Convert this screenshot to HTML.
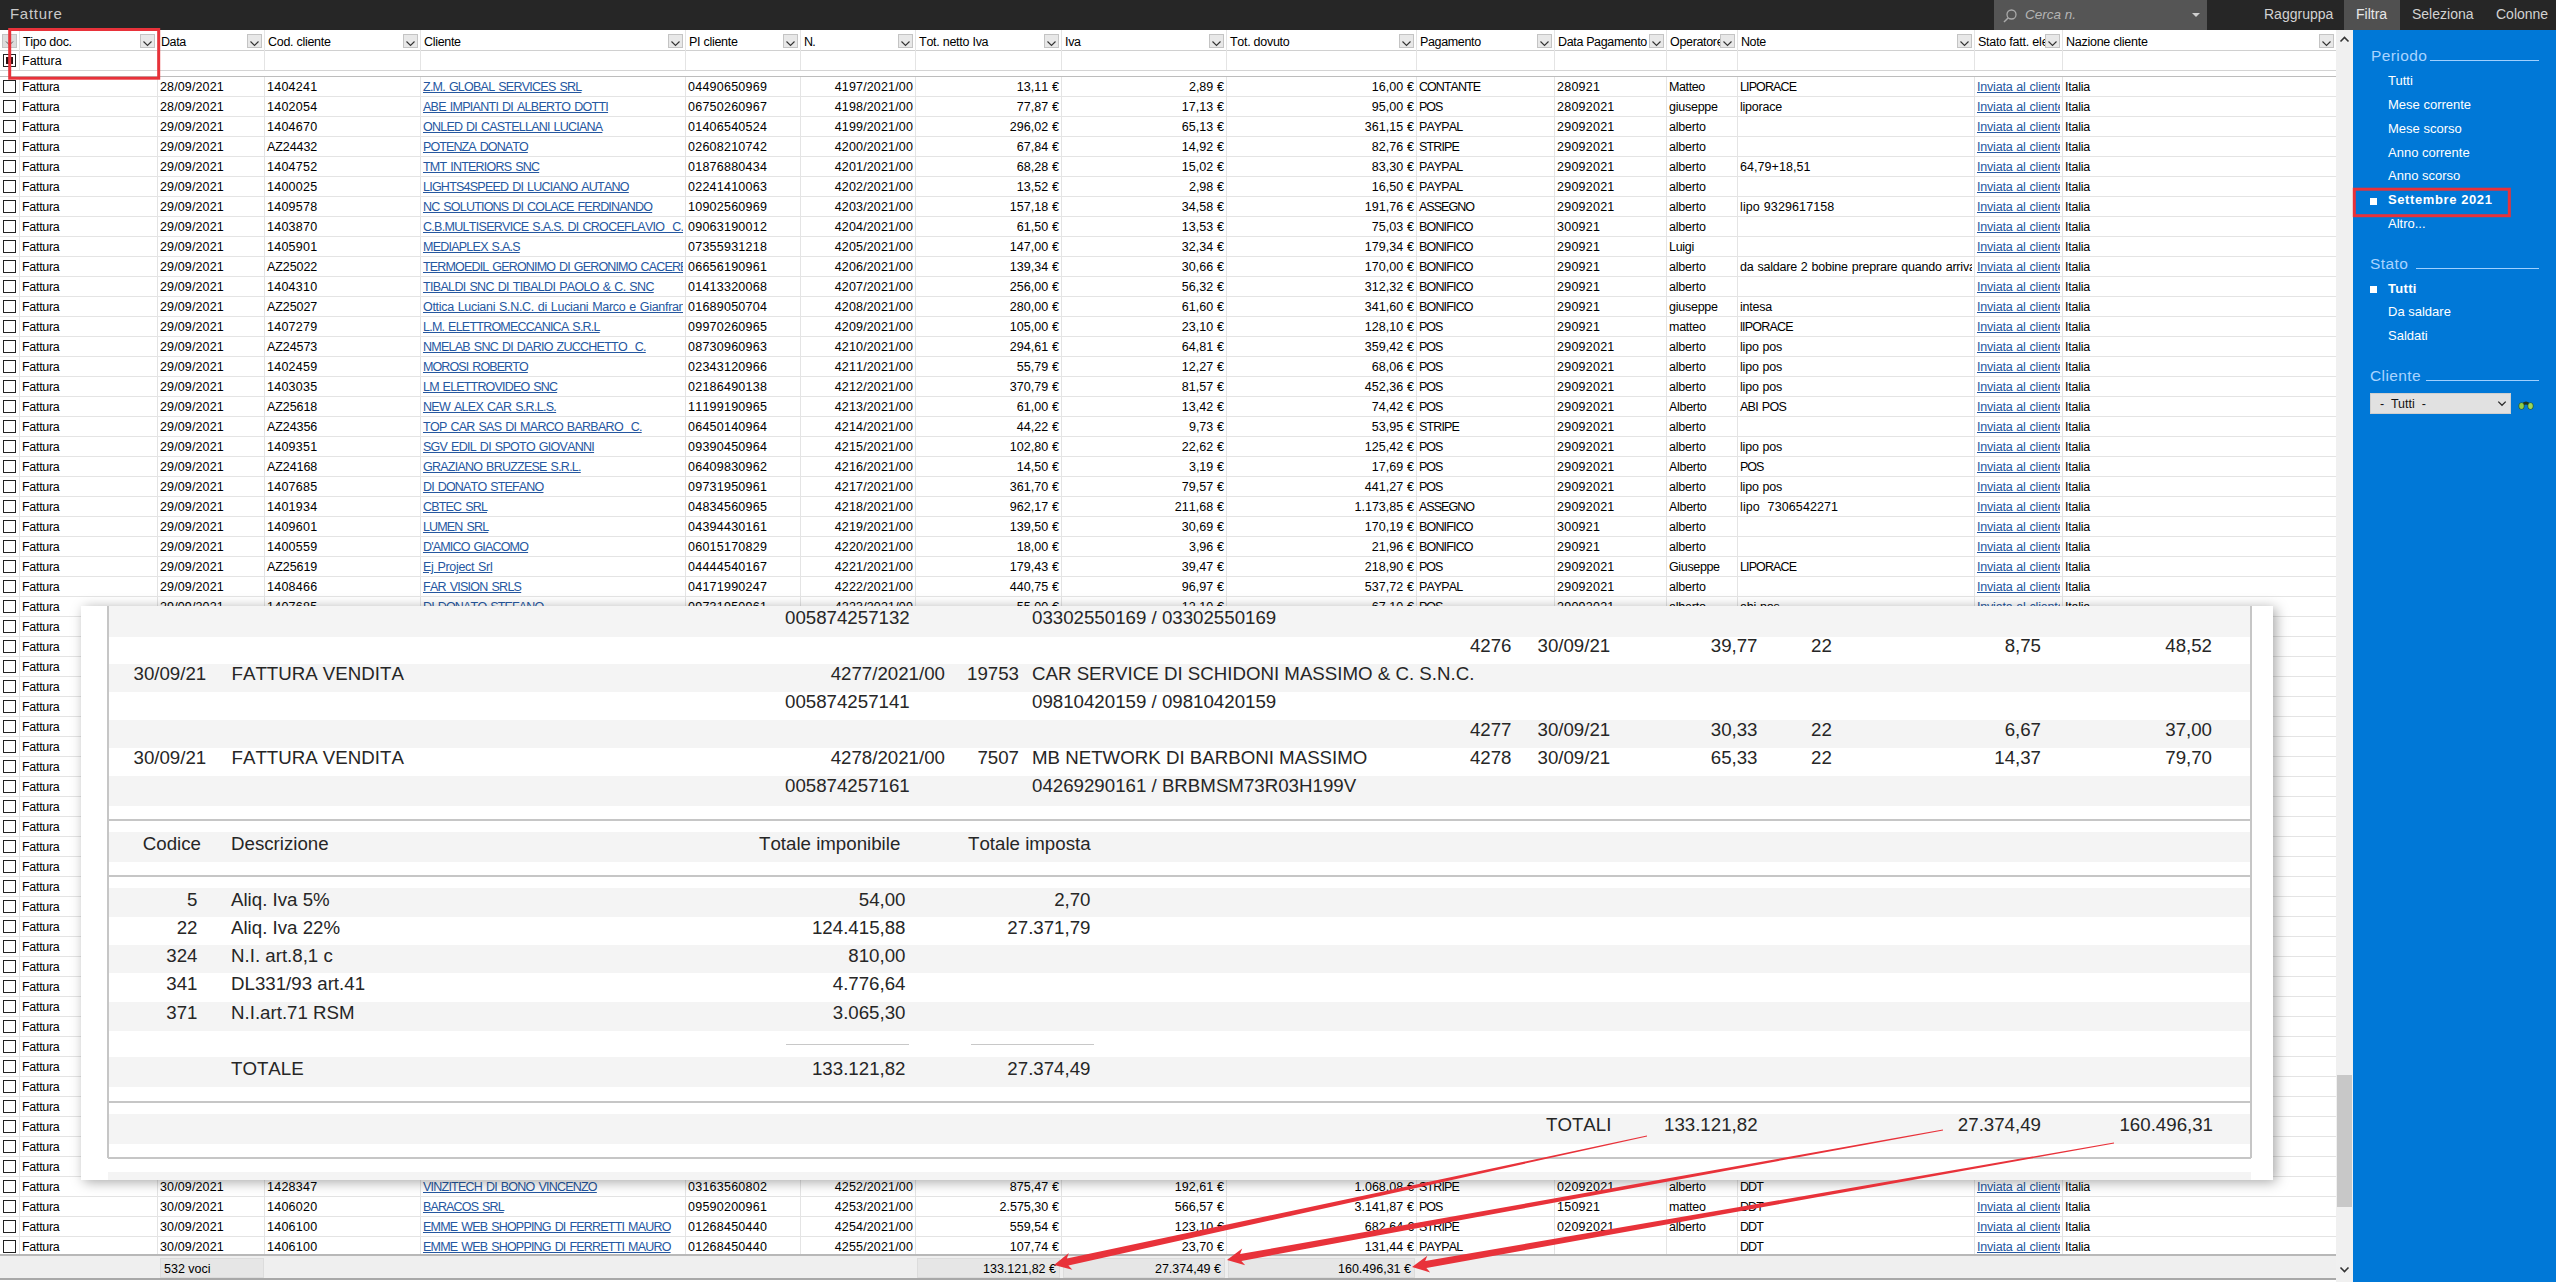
<!DOCTYPE html>
<html><head><meta charset="utf-8">
<style>
*{margin:0;padding:0;box-sizing:border-box}
html,body{width:2556px;height:1282px;overflow:hidden;background:#fff}
body{position:relative;font-family:"Liberation Sans",sans-serif;color:#000}
#top{position:absolute;left:0;top:0;width:2556px;height:30px;background:#262626}
#top .ttl{position:absolute;left:10px;top:5px;font-size:15px;color:#c9c9c9;letter-spacing:0.7px}
#search{position:absolute;left:1994px;top:0;width:213px;height:30px;background:#555}
#search .ph{position:absolute;left:31px;top:7px;font-size:13.5px;font-style:italic;color:#b4b4b4}
#search .tri{position:absolute;left:198px;top:13px;width:0;height:0;border-left:4px solid transparent;border-right:4px solid transparent;border-top:4px solid #cfcfcf}
.tb{position:absolute;top:6px;font-size:14px;color:#d2d2d2}
#filtra{position:absolute;left:2344px;top:0;width:56px;height:30px;background:#505050}
#grid{position:absolute;left:0;top:30px;width:2336px;height:1252px;background:#fff;overflow:hidden}
#hdr{position:absolute;left:0;top:0;width:2336px;height:21px;border-bottom:1px solid #d0d0d0;background:#fff}
.hc{position:absolute;top:0;height:20px;line-height:24px;font-size:12.5px;padding-left:3px;white-space:nowrap;overflow:hidden;color:#000;font-kerning:none}
.dd{position:absolute;top:4px;width:15px;height:14px;background:#e8e8e8;border:1px solid #c4c4c4}
.dd svg,.hcb svg{position:absolute;left:-1px;top:-1px}
.hcb{position:absolute;left:2px;top:4px;width:15px;height:14px;background:#dcdcdc;border:1px solid #c4c4c4}
.vl{position:absolute;top:0;width:1px;height:1224px;background:#e4e4e4}
#frow{position:absolute;left:0;top:21px;width:2336px;height:20px;border-bottom:1px solid #d4d4d4}
#sep{position:absolute;left:0;top:41px;width:2336px;height:6px;background:#fff;border-bottom:1px solid #bdbdbd}
.row{position:absolute;left:0;width:2336px;height:20px;border-bottom:1px solid #e4e4e4}
.c{position:absolute;top:0;height:19px;line-height:20px;font-size:12.5px;white-space:pre;overflow:hidden;font-kerning:none}
.c.l{padding-left:2px}
.c.r{text-align:right;padding-right:2px}
.lnk{color:#25579f;text-decoration:underline}
.cb{position:absolute;left:3px;top:3px;width:13px;height:13px;border:1.5px solid #222;background:#fff}
.cbf{position:absolute;left:3px;top:3px;width:13px;height:13px;border:1.5px solid #222;background:#fff}
.cbf div{position:absolute;left:1.5px;top:1.5px;width:7px;height:7px;background:#2a1010}
#foot{position:absolute;left:0;top:1224px;width:2336px;height:26px;background:#efefef;border-top:2px solid #b8b8b8;border-bottom:2px solid #a8a8a8}
.fc{position:absolute;top:2px;height:20px;background:#e6e6e6;border:1px solid #dcdcdc;font-size:12.5px;line-height:21px;white-space:nowrap}
#sb{position:absolute;left:2336px;top:30px;width:17px;height:1252px;background:#f0f0f0}
#thumb{position:absolute;left:1px;top:1045px;width:15px;height:132px;background:#c8c8c8}
#side{position:absolute;left:2353px;top:30px;width:203px;height:1252px;background:#0078d7;color:#fff}
.sh{position:absolute;left:17px;font-size:16px;color:#a9d4ff;letter-spacing:0.4px}
.shl{position:absolute;height:1px;background:#9fd0ff}
.si{position:absolute;left:35px;font-size:13px;color:#fff}
.si.b{font-weight:bold}
.bul{position:absolute;left:17px;width:7px;height:7px;background:#fff}
#overlay{position:absolute;left:81px;top:606px;width:2192px;height:574px;background:#fff;overflow:hidden;box-shadow:3px 2px 12px rgba(0,0,0,0.35)}
#overlay .t{font-kerning:none}
#ovr{font-family:"Liberation Sans",sans-serif;color:#2a2a2a}
.ot{position:absolute;font-size:19px;white-space:nowrap;line-height:22px}
.ot.r{text-align:right}
.band{position:absolute;left:27px;width:2143px;background:#f4f4f4}
</style></head><body>
<div id="top">
 <div class="ttl">Fatture</div>
 <div id="search">
  <svg style="position:absolute;left:8px;top:8px" width="16" height="16" viewBox="0 0 16 16"><circle cx="9.5" cy="6.5" r="4.5" fill="none" stroke="#aaa" stroke-width="1.3"/><path d="M6.3 9.7 L2 14" stroke="#aaa" stroke-width="1.5"/></svg>
  <div class="ph">Cerca n.</div><div class="tri"></div>
 </div>
 <div class="tb" style="left:2264px">Raggruppa</div>
 <div id="filtra"></div>
 <div class="tb" style="left:2356px;color:#e8e8e8">Filtra</div>
 <div class="tb" style="left:2412px">Seleziona</div>
 <div class="tb" style="left:2496px">Colonne</div>
</div>
<div id="grid">
<div id="hdr"><div class="hcb"><svg width="15" height="14" viewBox="0 0 15 14"><path d="M4 7.5 L7.5 11 L11 7.5" fill="none" stroke="#555" stroke-width="1"/></svg></div><div class="hc" style="left:20px;width:120px;letter-spacing:-0.29px">Tipo doc.</div><div class="dd" style="left:140px"><svg width="15" height="14" viewBox="0 0 15 14"><path d="M3.5 7.5 L7.5 11.5 L11.5 7.5" fill="none" stroke="#333" stroke-width="1.1"/></svg></div><div class="hc" style="left:158px;width:89px;letter-spacing:-0.42px">Data</div><div class="dd" style="left:247px"><svg width="15" height="14" viewBox="0 0 15 14"><path d="M3.5 7.5 L7.5 11.5 L11.5 7.5" fill="none" stroke="#333" stroke-width="1.1"/></svg></div><div class="hc" style="left:265px;width:138px;letter-spacing:-0.28px">Cod. cliente</div><div class="dd" style="left:403px"><svg width="15" height="14" viewBox="0 0 15 14"><path d="M3.5 7.5 L7.5 11.5 L11.5 7.5" fill="none" stroke="#333" stroke-width="1.1"/></svg></div><div class="hc" style="left:421px;width:247px;letter-spacing:-0.31px">Cliente</div><div class="dd" style="left:668px"><svg width="15" height="14" viewBox="0 0 15 14"><path d="M3.5 7.5 L7.5 11.5 L11.5 7.5" fill="none" stroke="#333" stroke-width="1.1"/></svg></div><div class="hc" style="left:686px;width:97px;letter-spacing:-0.28px">PI cliente</div><div class="dd" style="left:783px"><svg width="15" height="14" viewBox="0 0 15 14"><path d="M3.5 7.5 L7.5 11.5 L11.5 7.5" fill="none" stroke="#333" stroke-width="1.1"/></svg></div><div class="hc" style="left:801px;width:97px;letter-spacing:-0.67px">N.</div><div class="dd" style="left:898px"><svg width="15" height="14" viewBox="0 0 15 14"><path d="M3.5 7.5 L7.5 11.5 L11.5 7.5" fill="none" stroke="#333" stroke-width="1.1"/></svg></div><div class="hc" style="left:916px;width:128px;letter-spacing:-0.26px">Tot. netto Iva</div><div class="dd" style="left:1044px"><svg width="15" height="14" viewBox="0 0 15 14"><path d="M3.5 7.5 L7.5 11.5 L11.5 7.5" fill="none" stroke="#333" stroke-width="1.1"/></svg></div><div class="hc" style="left:1062px;width:147px;letter-spacing:-0.30px">Iva</div><div class="dd" style="left:1209px"><svg width="15" height="14" viewBox="0 0 15 14"><path d="M3.5 7.5 L7.5 11.5 L11.5 7.5" fill="none" stroke="#333" stroke-width="1.1"/></svg></div><div class="hc" style="left:1227px;width:172px;letter-spacing:-0.28px">Tot. dovuto</div><div class="dd" style="left:1399px"><svg width="15" height="14" viewBox="0 0 15 14"><path d="M3.5 7.5 L7.5 11.5 L11.5 7.5" fill="none" stroke="#333" stroke-width="1.1"/></svg></div><div class="hc" style="left:1417px;width:120px;letter-spacing:-0.35px">Pagamento</div><div class="dd" style="left:1537px"><svg width="15" height="14" viewBox="0 0 15 14"><path d="M3.5 7.5 L7.5 11.5 L11.5 7.5" fill="none" stroke="#333" stroke-width="1.1"/></svg></div><div class="hc" style="left:1555px;width:94px;letter-spacing:-0.35px">Data Pagamento</div><div class="dd" style="left:1649px"><svg width="15" height="14" viewBox="0 0 15 14"><path d="M3.5 7.5 L7.5 11.5 L11.5 7.5" fill="none" stroke="#333" stroke-width="1.1"/></svg></div><div class="hc" style="left:1667px;width:53px;letter-spacing:-0.33px">Operatore</div><div class="dd" style="left:1720px"><svg width="15" height="14" viewBox="0 0 15 14"><path d="M3.5 7.5 L7.5 11.5 L11.5 7.5" fill="none" stroke="#333" stroke-width="1.1"/></svg></div><div class="hc" style="left:1738px;width:219px;letter-spacing:-0.42px">Note</div><div class="dd" style="left:1957px"><svg width="15" height="14" viewBox="0 0 15 14"><path d="M3.5 7.5 L7.5 11.5 L11.5 7.5" fill="none" stroke="#333" stroke-width="1.1"/></svg></div><div class="hc" style="left:1975px;width:70px;letter-spacing:-0.22px">Stato fatt. elettronica</div><div class="dd" style="left:2045px"><svg width="15" height="14" viewBox="0 0 15 14"><path d="M3.5 7.5 L7.5 11.5 L11.5 7.5" fill="none" stroke="#333" stroke-width="1.1"/></svg></div><div class="hc" style="left:2063px;width:256px;letter-spacing:-0.26px">Nazione cliente</div><div class="dd" style="left:2319px"><svg width="15" height="14" viewBox="0 0 15 14"><path d="M3.5 7.5 L7.5 11.5 L11.5 7.5" fill="none" stroke="#333" stroke-width="1.1"/></svg></div></div>
<div class="vl" style="left:19px"></div><div class="vl" style="left:157px"></div><div class="vl" style="left:264px"></div><div class="vl" style="left:420px"></div><div class="vl" style="left:685px"></div><div class="vl" style="left:800px"></div><div class="vl" style="left:915px"></div><div class="vl" style="left:1061px"></div><div class="vl" style="left:1226px"></div><div class="vl" style="left:1416px"></div><div class="vl" style="left:1554px"></div><div class="vl" style="left:1666px"></div><div class="vl" style="left:1737px"></div><div class="vl" style="left:1974px"></div><div class="vl" style="left:2062px"></div>
<div id="frow"><div class="cbf"><div></div></div><div class="c l" style="left:20px;width:137px">Fattura</div></div>
<div class="row" style="top:47px"><div class="cb"></div><div class="c l" style="left:20px;width:135px;letter-spacing:-0.30px">Fattura</div><div class="c l" style="left:158px;width:104px;letter-spacing:0.13px">28/09/2021</div><div class="c l" style="left:265px;width:153px;letter-spacing:0.24px">1404241</div><div class="c l lnk" style="left:421px;width:262px;letter-spacing:-0.75px;word-spacing:1.16px">Z.M. GLOBAL SERVICES SRL</div><div class="c l" style="left:686px;width:112px;letter-spacing:0.24px">04490650969</div><div class="c r" style="left:801px;width:114px;letter-spacing:0.15px">4197/2021/00</div><div class="c r" style="left:916px;width:145px;word-spacing:0.42px">13,11 €</div><div class="c r" style="left:1062px;width:164px;letter-spacing:-0.04px;word-spacing:0.46px">2,89 €</div><div class="c r" style="left:1227px;width:189px;word-spacing:0.42px">16,00 €</div><div class="c l" style="left:1417px;width:135px;letter-spacing:-0.95px">CONTANTE</div><div class="c l" style="left:1555px;width:109px;letter-spacing:0.24px">280921</div><div class="c l" style="left:1667px;width:68px;letter-spacing:-0.38px">Matteo</div><div class="c l" style="left:1738px;width:234px;letter-spacing:-0.88px">LIPORACE</div><div class="c l lnk" style="left:1975px;width:85px;letter-spacing:-0.20px;word-spacing:0.61px">Inviata al cliente</div><div class="c l" style="left:2063px;width:271px;letter-spacing:-0.22px">Italia</div></div><div class="row" style="top:67px"><div class="cb"></div><div class="c l" style="left:20px;width:135px;letter-spacing:-0.30px">Fattura</div><div class="c l" style="left:158px;width:104px;letter-spacing:0.13px">28/09/2021</div><div class="c l" style="left:265px;width:153px;letter-spacing:0.24px">1402054</div><div class="c l lnk" style="left:421px;width:262px;letter-spacing:-0.72px;word-spacing:1.13px">ABE IMPIANTI DI ALBERTO DOTTI</div><div class="c l" style="left:686px;width:112px;letter-spacing:0.24px">06750260967</div><div class="c r" style="left:801px;width:114px;letter-spacing:0.15px">4198/2021/00</div><div class="c r" style="left:916px;width:145px;word-spacing:0.42px">77,87 €</div><div class="c r" style="left:1062px;width:164px;word-spacing:0.42px">17,13 €</div><div class="c r" style="left:1227px;width:189px;word-spacing:0.42px">95,00 €</div><div class="c l" style="left:1417px;width:135px;letter-spacing:-0.98px">POS</div><div class="c l" style="left:1555px;width:109px;letter-spacing:0.24px">28092021</div><div class="c l" style="left:1667px;width:68px;letter-spacing:-0.25px">giuseppe</div><div class="c l" style="left:1738px;width:234px;letter-spacing:-0.22px">liporace</div><div class="c l lnk" style="left:1975px;width:85px;letter-spacing:-0.20px;word-spacing:0.61px">Inviata al cliente</div><div class="c l" style="left:2063px;width:271px;letter-spacing:-0.22px">Italia</div></div><div class="row" style="top:87px"><div class="cb"></div><div class="c l" style="left:20px;width:135px;letter-spacing:-0.30px">Fattura</div><div class="c l" style="left:158px;width:104px;letter-spacing:0.13px">29/09/2021</div><div class="c l" style="left:265px;width:153px;letter-spacing:0.24px">1404670</div><div class="c l lnk" style="left:421px;width:262px;letter-spacing:-0.77px;word-spacing:1.18px">ONLED DI CASTELLANI LUCIANA</div><div class="c l" style="left:686px;width:112px;letter-spacing:0.24px">01406540524</div><div class="c r" style="left:801px;width:114px;letter-spacing:0.15px">4199/2021/00</div><div class="c r" style="left:916px;width:145px;letter-spacing:0.03px;word-spacing:0.39px">296,02 €</div><div class="c r" style="left:1062px;width:164px;word-spacing:0.42px">65,13 €</div><div class="c r" style="left:1227px;width:189px;letter-spacing:0.03px;word-spacing:0.39px">361,15 €</div><div class="c l" style="left:1417px;width:135px;letter-spacing:-0.90px">PAYPAL</div><div class="c l" style="left:1555px;width:109px;letter-spacing:0.24px">29092021</div><div class="c l" style="left:1667px;width:68px;letter-spacing:-0.22px">alberto</div><div class="c l lnk" style="left:1975px;width:85px;letter-spacing:-0.20px;word-spacing:0.61px">Inviata al cliente</div><div class="c l" style="left:2063px;width:271px;letter-spacing:-0.22px">Italia</div></div><div class="row" style="top:107px"><div class="cb"></div><div class="c l" style="left:20px;width:135px;letter-spacing:-0.30px">Fattura</div><div class="c l" style="left:158px;width:104px;letter-spacing:0.13px">29/09/2021</div><div class="c l" style="left:265px;width:153px;letter-spacing:-0.08px">AZ24432</div><div class="c l lnk" style="left:421px;width:262px;letter-spacing:-0.89px;word-spacing:1.31px">POTENZA DONATO</div><div class="c l" style="left:686px;width:112px;letter-spacing:0.24px">02608210742</div><div class="c r" style="left:801px;width:114px;letter-spacing:0.15px">4200/2021/00</div><div class="c r" style="left:916px;width:145px;word-spacing:0.42px">67,84 €</div><div class="c r" style="left:1062px;width:164px;word-spacing:0.42px">14,92 €</div><div class="c r" style="left:1227px;width:189px;word-spacing:0.42px">82,76 €</div><div class="c l" style="left:1417px;width:135px;letter-spacing:-0.84px">STRIPE</div><div class="c l" style="left:1555px;width:109px;letter-spacing:0.24px">29092021</div><div class="c l" style="left:1667px;width:68px;letter-spacing:-0.22px">alberto</div><div class="c l lnk" style="left:1975px;width:85px;letter-spacing:-0.20px;word-spacing:0.61px">Inviata al cliente</div><div class="c l" style="left:2063px;width:271px;letter-spacing:-0.22px">Italia</div></div><div class="row" style="top:127px"><div class="cb"></div><div class="c l" style="left:20px;width:135px;letter-spacing:-0.30px">Fattura</div><div class="c l" style="left:158px;width:104px;letter-spacing:0.13px">29/09/2021</div><div class="c l" style="left:265px;width:153px;letter-spacing:0.24px">1404752</div><div class="c l lnk" style="left:421px;width:262px;letter-spacing:-0.78px;word-spacing:1.20px">TMT INTERIORS SNC</div><div class="c l" style="left:686px;width:112px;letter-spacing:0.24px">01876880434</div><div class="c r" style="left:801px;width:114px;letter-spacing:0.15px">4201/2021/00</div><div class="c r" style="left:916px;width:145px;word-spacing:0.42px">68,28 €</div><div class="c r" style="left:1062px;width:164px;word-spacing:0.42px">15,02 €</div><div class="c r" style="left:1227px;width:189px;word-spacing:0.42px">83,30 €</div><div class="c l" style="left:1417px;width:135px;letter-spacing:-0.90px">PAYPAL</div><div class="c l" style="left:1555px;width:109px;letter-spacing:0.24px">29092021</div><div class="c l" style="left:1667px;width:68px;letter-spacing:-0.22px">alberto</div><div class="c l" style="left:1738px;width:234px;letter-spacing:0.05px">64,79+18,51</div><div class="c l lnk" style="left:1975px;width:85px;letter-spacing:-0.20px;word-spacing:0.61px">Inviata al cliente</div><div class="c l" style="left:2063px;width:271px;letter-spacing:-0.22px">Italia</div></div><div class="row" style="top:147px"><div class="cb"></div><div class="c l" style="left:20px;width:135px;letter-spacing:-0.30px">Fattura</div><div class="c l" style="left:158px;width:104px;letter-spacing:0.13px">29/09/2021</div><div class="c l" style="left:265px;width:153px;letter-spacing:0.24px">1400025</div><div class="c l lnk" style="left:421px;width:262px;letter-spacing:-0.76px;word-spacing:1.18px">LIGHTS4SPEED DI LUCIANO AUTANO</div><div class="c l" style="left:686px;width:112px;letter-spacing:0.24px">02241410063</div><div class="c r" style="left:801px;width:114px;letter-spacing:0.15px">4202/2021/00</div><div class="c r" style="left:916px;width:145px;word-spacing:0.42px">13,52 €</div><div class="c r" style="left:1062px;width:164px;letter-spacing:-0.04px;word-spacing:0.46px">2,98 €</div><div class="c r" style="left:1227px;width:189px;word-spacing:0.42px">16,50 €</div><div class="c l" style="left:1417px;width:135px;letter-spacing:-0.90px">PAYPAL</div><div class="c l" style="left:1555px;width:109px;letter-spacing:0.24px">29092021</div><div class="c l" style="left:1667px;width:68px;letter-spacing:-0.22px">alberto</div><div class="c l lnk" style="left:1975px;width:85px;letter-spacing:-0.20px;word-spacing:0.61px">Inviata al cliente</div><div class="c l" style="left:2063px;width:271px;letter-spacing:-0.22px">Italia</div></div><div class="row" style="top:167px"><div class="cb"></div><div class="c l" style="left:20px;width:135px;letter-spacing:-0.30px">Fattura</div><div class="c l" style="left:158px;width:104px;letter-spacing:0.13px">29/09/2021</div><div class="c l" style="left:265px;width:153px;letter-spacing:0.24px">1409578</div><div class="c l lnk" style="left:421px;width:262px;letter-spacing:-0.80px;word-spacing:1.21px">NC SOLUTIONS DI COLACE FERDINANDO</div><div class="c l" style="left:686px;width:112px;letter-spacing:0.24px">10902560969</div><div class="c r" style="left:801px;width:114px;letter-spacing:0.15px">4203/2021/00</div><div class="c r" style="left:916px;width:145px;letter-spacing:0.03px;word-spacing:0.39px">157,18 €</div><div class="c r" style="left:1062px;width:164px;word-spacing:0.42px">34,58 €</div><div class="c r" style="left:1227px;width:189px;letter-spacing:0.03px;word-spacing:0.39px">191,76 €</div><div class="c l" style="left:1417px;width:135px;letter-spacing:-0.98px">ASSEGNO</div><div class="c l" style="left:1555px;width:109px;letter-spacing:0.24px">29092021</div><div class="c l" style="left:1667px;width:68px;letter-spacing:-0.22px">alberto</div><div class="c l" style="left:1738px;width:234px;letter-spacing:0.11px;word-spacing:0.31px">lipo 9329617158</div><div class="c l lnk" style="left:1975px;width:85px;letter-spacing:-0.20px;word-spacing:0.61px">Inviata al cliente</div><div class="c l" style="left:2063px;width:271px;letter-spacing:-0.22px">Italia</div></div><div class="row" style="top:187px"><div class="cb"></div><div class="c l" style="left:20px;width:135px;letter-spacing:-0.30px">Fattura</div><div class="c l" style="left:158px;width:104px;letter-spacing:0.13px">29/09/2021</div><div class="c l" style="left:265px;width:153px;letter-spacing:0.24px">1403870</div><div class="c l lnk" style="left:421px;width:262px;letter-spacing:-0.70px;word-spacing:1.11px">C.B.MULTISERVICE S.A.S. DI CROCEFLAVIO  C.</div><div class="c l" style="left:686px;width:112px;letter-spacing:0.24px">09063190012</div><div class="c r" style="left:801px;width:114px;letter-spacing:0.15px">4204/2021/00</div><div class="c r" style="left:916px;width:145px;word-spacing:0.42px">61,50 €</div><div class="c r" style="left:1062px;width:164px;word-spacing:0.42px">13,53 €</div><div class="c r" style="left:1227px;width:189px;word-spacing:0.42px">75,03 €</div><div class="c l" style="left:1417px;width:135px;letter-spacing:-0.84px">BONIFICO</div><div class="c l" style="left:1555px;width:109px;letter-spacing:0.24px">300921</div><div class="c l" style="left:1667px;width:68px;letter-spacing:-0.22px">alberto</div><div class="c l lnk" style="left:1975px;width:85px;letter-spacing:-0.20px;word-spacing:0.61px">Inviata al cliente</div><div class="c l" style="left:2063px;width:271px;letter-spacing:-0.22px">Italia</div></div><div class="row" style="top:207px"><div class="cb"></div><div class="c l" style="left:20px;width:135px;letter-spacing:-0.30px">Fattura</div><div class="c l" style="left:158px;width:104px;letter-spacing:0.13px">29/09/2021</div><div class="c l" style="left:265px;width:153px;letter-spacing:0.24px">1405901</div><div class="c l lnk" style="left:421px;width:262px;letter-spacing:-0.76px;word-spacing:1.18px">MEDIAPLEX S.A.S</div><div class="c l" style="left:686px;width:112px;letter-spacing:0.24px">07355931218</div><div class="c r" style="left:801px;width:114px;letter-spacing:0.15px">4205/2021/00</div><div class="c r" style="left:916px;width:145px;letter-spacing:0.03px;word-spacing:0.39px">147,00 €</div><div class="c r" style="left:1062px;width:164px;word-spacing:0.42px">32,34 €</div><div class="c r" style="left:1227px;width:189px;letter-spacing:0.03px;word-spacing:0.39px">179,34 €</div><div class="c l" style="left:1417px;width:135px;letter-spacing:-0.84px">BONIFICO</div><div class="c l" style="left:1555px;width:109px;letter-spacing:0.24px">290921</div><div class="c l" style="left:1667px;width:68px;letter-spacing:-0.31px">Luigi</div><div class="c l lnk" style="left:1975px;width:85px;letter-spacing:-0.20px;word-spacing:0.61px">Inviata al cliente</div><div class="c l" style="left:2063px;width:271px;letter-spacing:-0.22px">Italia</div></div><div class="row" style="top:227px"><div class="cb"></div><div class="c l" style="left:20px;width:135px;letter-spacing:-0.30px">Fattura</div><div class="c l" style="left:158px;width:104px;letter-spacing:0.13px">29/09/2021</div><div class="c l" style="left:265px;width:153px;letter-spacing:-0.08px">AZ25022</div><div class="c l lnk" style="left:421px;width:262px;letter-spacing:-0.83px;word-spacing:1.25px">TERMOEDIL GERONIMO DI GERONIMO CACERES</div><div class="c l" style="left:686px;width:112px;letter-spacing:0.24px">06656190961</div><div class="c r" style="left:801px;width:114px;letter-spacing:0.15px">4206/2021/00</div><div class="c r" style="left:916px;width:145px;letter-spacing:0.03px;word-spacing:0.39px">139,34 €</div><div class="c r" style="left:1062px;width:164px;word-spacing:0.42px">30,66 €</div><div class="c r" style="left:1227px;width:189px;letter-spacing:0.03px;word-spacing:0.39px">170,00 €</div><div class="c l" style="left:1417px;width:135px;letter-spacing:-0.84px">BONIFICO</div><div class="c l" style="left:1555px;width:109px;letter-spacing:0.24px">290921</div><div class="c l" style="left:1667px;width:68px;letter-spacing:-0.22px">alberto</div><div class="c l" style="left:1738px;width:234px;letter-spacing:-0.20px;word-spacing:0.61px">da saldare 2 bobine preprare quando arriva</div><div class="c l lnk" style="left:1975px;width:85px;letter-spacing:-0.20px;word-spacing:0.61px">Inviata al cliente</div><div class="c l" style="left:2063px;width:271px;letter-spacing:-0.22px">Italia</div></div><div class="row" style="top:247px"><div class="cb"></div><div class="c l" style="left:20px;width:135px;letter-spacing:-0.30px">Fattura</div><div class="c l" style="left:158px;width:104px;letter-spacing:0.13px">29/09/2021</div><div class="c l" style="left:265px;width:153px;letter-spacing:0.24px">1404310</div><div class="c l lnk" style="left:421px;width:262px;letter-spacing:-0.67px;word-spacing:1.08px">TIBALDI SNC DI TIBALDI PAOLO &amp; C. SNC</div><div class="c l" style="left:686px;width:112px;letter-spacing:0.24px">01413320068</div><div class="c r" style="left:801px;width:114px;letter-spacing:0.15px">4207/2021/00</div><div class="c r" style="left:916px;width:145px;letter-spacing:0.03px;word-spacing:0.39px">256,00 €</div><div class="c r" style="left:1062px;width:164px;word-spacing:0.42px">56,32 €</div><div class="c r" style="left:1227px;width:189px;letter-spacing:0.03px;word-spacing:0.39px">312,32 €</div><div class="c l" style="left:1417px;width:135px;letter-spacing:-0.84px">BONIFICO</div><div class="c l" style="left:1555px;width:109px;letter-spacing:0.24px">290921</div><div class="c l" style="left:1667px;width:68px;letter-spacing:-0.22px">alberto</div><div class="c l lnk" style="left:1975px;width:85px;letter-spacing:-0.20px;word-spacing:0.61px">Inviata al cliente</div><div class="c l" style="left:2063px;width:271px;letter-spacing:-0.22px">Italia</div></div><div class="row" style="top:267px"><div class="cb"></div><div class="c l" style="left:20px;width:135px;letter-spacing:-0.30px">Fattura</div><div class="c l" style="left:158px;width:104px;letter-spacing:0.13px">29/09/2021</div><div class="c l" style="left:265px;width:153px;letter-spacing:-0.08px">AZ25027</div><div class="c l lnk" style="left:421px;width:262px;letter-spacing:-0.31px;word-spacing:0.73px">Ottica Luciani S.N.C. di Luciani Marco e Gianfranco</div><div class="c l" style="left:686px;width:112px;letter-spacing:0.24px">01689050704</div><div class="c r" style="left:801px;width:114px;letter-spacing:0.15px">4208/2021/00</div><div class="c r" style="left:916px;width:145px;letter-spacing:0.03px;word-spacing:0.39px">280,00 €</div><div class="c r" style="left:1062px;width:164px;word-spacing:0.42px">61,60 €</div><div class="c r" style="left:1227px;width:189px;letter-spacing:0.03px;word-spacing:0.39px">341,60 €</div><div class="c l" style="left:1417px;width:135px;letter-spacing:-0.84px">BONIFICO</div><div class="c l" style="left:1555px;width:109px;letter-spacing:0.24px">290921</div><div class="c l" style="left:1667px;width:68px;letter-spacing:-0.25px">giuseppe</div><div class="c l" style="left:1738px;width:234px;letter-spacing:-0.22px">intesa</div><div class="c l lnk" style="left:1975px;width:85px;letter-spacing:-0.20px;word-spacing:0.61px">Inviata al cliente</div><div class="c l" style="left:2063px;width:271px;letter-spacing:-0.22px">Italia</div></div><div class="row" style="top:287px"><div class="cb"></div><div class="c l" style="left:20px;width:135px;letter-spacing:-0.30px">Fattura</div><div class="c l" style="left:158px;width:104px;letter-spacing:0.13px">29/09/2021</div><div class="c l" style="left:265px;width:153px;letter-spacing:0.24px">1407279</div><div class="c l lnk" style="left:421px;width:262px;letter-spacing:-0.77px;word-spacing:1.18px">L.M. ELETTROMECCANICA S.R.L</div><div class="c l" style="left:686px;width:112px;letter-spacing:0.24px">09970260965</div><div class="c r" style="left:801px;width:114px;letter-spacing:0.15px">4209/2021/00</div><div class="c r" style="left:916px;width:145px;letter-spacing:0.03px;word-spacing:0.39px">105,00 €</div><div class="c r" style="left:1062px;width:164px;word-spacing:0.42px">23,10 €</div><div class="c r" style="left:1227px;width:189px;letter-spacing:0.03px;word-spacing:0.39px">128,10 €</div><div class="c l" style="left:1417px;width:135px;letter-spacing:-0.98px">POS</div><div class="c l" style="left:1555px;width:109px;letter-spacing:0.24px">290921</div><div class="c l" style="left:1667px;width:68px;letter-spacing:-0.25px">matteo</div><div class="c l" style="left:1738px;width:234px;letter-spacing:-0.79px">lIPORACE</div><div class="c l lnk" style="left:1975px;width:85px;letter-spacing:-0.20px;word-spacing:0.61px">Inviata al cliente</div><div class="c l" style="left:2063px;width:271px;letter-spacing:-0.22px">Italia</div></div><div class="row" style="top:307px"><div class="cb"></div><div class="c l" style="left:20px;width:135px;letter-spacing:-0.30px">Fattura</div><div class="c l" style="left:158px;width:104px;letter-spacing:0.13px">29/09/2021</div><div class="c l" style="left:265px;width:153px;letter-spacing:-0.08px">AZ24573</div><div class="c l lnk" style="left:421px;width:262px;letter-spacing:-0.74px;word-spacing:1.15px">NMELAB SNC DI DARIO ZUCCHETTO  C.</div><div class="c l" style="left:686px;width:112px;letter-spacing:0.24px">08730960963</div><div class="c r" style="left:801px;width:114px;letter-spacing:0.15px">4210/2021/00</div><div class="c r" style="left:916px;width:145px;letter-spacing:0.03px;word-spacing:0.39px">294,61 €</div><div class="c r" style="left:1062px;width:164px;word-spacing:0.42px">64,81 €</div><div class="c r" style="left:1227px;width:189px;letter-spacing:0.03px;word-spacing:0.39px">359,42 €</div><div class="c l" style="left:1417px;width:135px;letter-spacing:-0.98px">POS</div><div class="c l" style="left:1555px;width:109px;letter-spacing:0.24px">29092021</div><div class="c l" style="left:1667px;width:68px;letter-spacing:-0.22px">alberto</div><div class="c l" style="left:1738px;width:234px;letter-spacing:-0.20px;word-spacing:0.61px">lipo pos</div><div class="c l lnk" style="left:1975px;width:85px;letter-spacing:-0.20px;word-spacing:0.61px">Inviata al cliente</div><div class="c l" style="left:2063px;width:271px;letter-spacing:-0.22px">Italia</div></div><div class="row" style="top:327px"><div class="cb"></div><div class="c l" style="left:20px;width:135px;letter-spacing:-0.30px">Fattura</div><div class="c l" style="left:158px;width:104px;letter-spacing:0.13px">29/09/2021</div><div class="c l" style="left:265px;width:153px;letter-spacing:0.24px">1402459</div><div class="c l lnk" style="left:421px;width:262px;letter-spacing:-0.89px;word-spacing:1.31px">MOROSI ROBERTO</div><div class="c l" style="left:686px;width:112px;letter-spacing:0.24px">02343120966</div><div class="c r" style="left:801px;width:114px;letter-spacing:0.15px">4211/2021/00</div><div class="c r" style="left:916px;width:145px;word-spacing:0.42px">55,79 €</div><div class="c r" style="left:1062px;width:164px;word-spacing:0.42px">12,27 €</div><div class="c r" style="left:1227px;width:189px;word-spacing:0.42px">68,06 €</div><div class="c l" style="left:1417px;width:135px;letter-spacing:-0.98px">POS</div><div class="c l" style="left:1555px;width:109px;letter-spacing:0.24px">29092021</div><div class="c l" style="left:1667px;width:68px;letter-spacing:-0.22px">alberto</div><div class="c l" style="left:1738px;width:234px;letter-spacing:-0.20px;word-spacing:0.61px">lipo pos</div><div class="c l lnk" style="left:1975px;width:85px;letter-spacing:-0.20px;word-spacing:0.61px">Inviata al cliente</div><div class="c l" style="left:2063px;width:271px;letter-spacing:-0.22px">Italia</div></div><div class="row" style="top:347px"><div class="cb"></div><div class="c l" style="left:20px;width:135px;letter-spacing:-0.30px">Fattura</div><div class="c l" style="left:158px;width:104px;letter-spacing:0.13px">29/09/2021</div><div class="c l" style="left:265px;width:153px;letter-spacing:0.24px">1403035</div><div class="c l lnk" style="left:421px;width:262px;letter-spacing:-0.82px;word-spacing:1.24px">LM ELETTROVIDEO SNC</div><div class="c l" style="left:686px;width:112px;letter-spacing:0.24px">02186490138</div><div class="c r" style="left:801px;width:114px;letter-spacing:0.15px">4212/2021/00</div><div class="c r" style="left:916px;width:145px;letter-spacing:0.03px;word-spacing:0.39px">370,79 €</div><div class="c r" style="left:1062px;width:164px;word-spacing:0.42px">81,57 €</div><div class="c r" style="left:1227px;width:189px;letter-spacing:0.03px;word-spacing:0.39px">452,36 €</div><div class="c l" style="left:1417px;width:135px;letter-spacing:-0.98px">POS</div><div class="c l" style="left:1555px;width:109px;letter-spacing:0.24px">29092021</div><div class="c l" style="left:1667px;width:68px;letter-spacing:-0.22px">alberto</div><div class="c l" style="left:1738px;width:234px;letter-spacing:-0.20px;word-spacing:0.61px">lipo pos</div><div class="c l lnk" style="left:1975px;width:85px;letter-spacing:-0.20px;word-spacing:0.61px">Inviata al cliente</div><div class="c l" style="left:2063px;width:271px;letter-spacing:-0.22px">Italia</div></div><div class="row" style="top:367px"><div class="cb"></div><div class="c l" style="left:20px;width:135px;letter-spacing:-0.30px">Fattura</div><div class="c l" style="left:158px;width:104px;letter-spacing:0.13px">29/09/2021</div><div class="c l" style="left:265px;width:153px;letter-spacing:-0.08px">AZ25618</div><div class="c l lnk" style="left:421px;width:262px;letter-spacing:-0.70px;word-spacing:1.11px">NEW ALEX CAR S.R.L.S.</div><div class="c l" style="left:686px;width:112px;letter-spacing:0.24px">11199190965</div><div class="c r" style="left:801px;width:114px;letter-spacing:0.15px">4213/2021/00</div><div class="c r" style="left:916px;width:145px;word-spacing:0.42px">61,00 €</div><div class="c r" style="left:1062px;width:164px;word-spacing:0.42px">13,42 €</div><div class="c r" style="left:1227px;width:189px;word-spacing:0.42px">74,42 €</div><div class="c l" style="left:1417px;width:135px;letter-spacing:-0.98px">POS</div><div class="c l" style="left:1555px;width:109px;letter-spacing:0.24px">29092021</div><div class="c l" style="left:1667px;width:68px;letter-spacing:-0.31px">Alberto</div><div class="c l" style="left:1738px;width:234px;letter-spacing:-0.74px;word-spacing:1.15px">ABI POS</div><div class="c l lnk" style="left:1975px;width:85px;letter-spacing:-0.20px;word-spacing:0.61px">Inviata al cliente</div><div class="c l" style="left:2063px;width:271px;letter-spacing:-0.22px">Italia</div></div><div class="row" style="top:387px"><div class="cb"></div><div class="c l" style="left:20px;width:135px;letter-spacing:-0.30px">Fattura</div><div class="c l" style="left:158px;width:104px;letter-spacing:0.13px">29/09/2021</div><div class="c l" style="left:265px;width:153px;letter-spacing:-0.08px">AZ24356</div><div class="c l lnk" style="left:421px;width:262px;letter-spacing:-0.73px;word-spacing:1.14px">TOP CAR SAS DI MARCO BARBARO  C.</div><div class="c l" style="left:686px;width:112px;letter-spacing:0.24px">06450140964</div><div class="c r" style="left:801px;width:114px;letter-spacing:0.15px">4214/2021/00</div><div class="c r" style="left:916px;width:145px;word-spacing:0.42px">44,22 €</div><div class="c r" style="left:1062px;width:164px;letter-spacing:-0.04px;word-spacing:0.46px">9,73 €</div><div class="c r" style="left:1227px;width:189px;word-spacing:0.42px">53,95 €</div><div class="c l" style="left:1417px;width:135px;letter-spacing:-0.84px">STRIPE</div><div class="c l" style="left:1555px;width:109px;letter-spacing:0.24px">29092021</div><div class="c l" style="left:1667px;width:68px;letter-spacing:-0.22px">alberto</div><div class="c l lnk" style="left:1975px;width:85px;letter-spacing:-0.20px;word-spacing:0.61px">Inviata al cliente</div><div class="c l" style="left:2063px;width:271px;letter-spacing:-0.22px">Italia</div></div><div class="row" style="top:407px"><div class="cb"></div><div class="c l" style="left:20px;width:135px;letter-spacing:-0.30px">Fattura</div><div class="c l" style="left:158px;width:104px;letter-spacing:0.13px">29/09/2021</div><div class="c l" style="left:265px;width:153px;letter-spacing:0.24px">1409351</div><div class="c l lnk" style="left:421px;width:262px;letter-spacing:-0.73px;word-spacing:1.15px">SGV EDIL DI SPOTO GIOVANNI</div><div class="c l" style="left:686px;width:112px;letter-spacing:0.24px">09390450964</div><div class="c r" style="left:801px;width:114px;letter-spacing:0.15px">4215/2021/00</div><div class="c r" style="left:916px;width:145px;letter-spacing:0.03px;word-spacing:0.39px">102,80 €</div><div class="c r" style="left:1062px;width:164px;word-spacing:0.42px">22,62 €</div><div class="c r" style="left:1227px;width:189px;letter-spacing:0.03px;word-spacing:0.39px">125,42 €</div><div class="c l" style="left:1417px;width:135px;letter-spacing:-0.98px">POS</div><div class="c l" style="left:1555px;width:109px;letter-spacing:0.24px">29092021</div><div class="c l" style="left:1667px;width:68px;letter-spacing:-0.22px">alberto</div><div class="c l" style="left:1738px;width:234px;letter-spacing:-0.20px;word-spacing:0.61px">lipo pos</div><div class="c l lnk" style="left:1975px;width:85px;letter-spacing:-0.20px;word-spacing:0.61px">Inviata al cliente</div><div class="c l" style="left:2063px;width:271px;letter-spacing:-0.22px">Italia</div></div><div class="row" style="top:427px"><div class="cb"></div><div class="c l" style="left:20px;width:135px;letter-spacing:-0.30px">Fattura</div><div class="c l" style="left:158px;width:104px;letter-spacing:0.13px">29/09/2021</div><div class="c l" style="left:265px;width:153px;letter-spacing:-0.08px">AZ24168</div><div class="c l lnk" style="left:421px;width:262px;letter-spacing:-0.76px;word-spacing:1.18px">GRAZIANO BRUZZESE S.R.L.</div><div class="c l" style="left:686px;width:112px;letter-spacing:0.24px">06409830962</div><div class="c r" style="left:801px;width:114px;letter-spacing:0.15px">4216/2021/00</div><div class="c r" style="left:916px;width:145px;word-spacing:0.42px">14,50 €</div><div class="c r" style="left:1062px;width:164px;letter-spacing:-0.04px;word-spacing:0.46px">3,19 €</div><div class="c r" style="left:1227px;width:189px;word-spacing:0.42px">17,69 €</div><div class="c l" style="left:1417px;width:135px;letter-spacing:-0.98px">POS</div><div class="c l" style="left:1555px;width:109px;letter-spacing:0.24px">29092021</div><div class="c l" style="left:1667px;width:68px;letter-spacing:-0.31px">Alberto</div><div class="c l" style="left:1738px;width:234px;letter-spacing:-0.98px">POS</div><div class="c l lnk" style="left:1975px;width:85px;letter-spacing:-0.20px;word-spacing:0.61px">Inviata al cliente</div><div class="c l" style="left:2063px;width:271px;letter-spacing:-0.22px">Italia</div></div><div class="row" style="top:447px"><div class="cb"></div><div class="c l" style="left:20px;width:135px;letter-spacing:-0.30px">Fattura</div><div class="c l" style="left:158px;width:104px;letter-spacing:0.13px">29/09/2021</div><div class="c l" style="left:265px;width:153px;letter-spacing:0.24px">1407685</div><div class="c l lnk" style="left:421px;width:262px;letter-spacing:-0.82px;word-spacing:1.23px">DI DONATO STEFANO</div><div class="c l" style="left:686px;width:112px;letter-spacing:0.24px">09731950961</div><div class="c r" style="left:801px;width:114px;letter-spacing:0.15px">4217/2021/00</div><div class="c r" style="left:916px;width:145px;letter-spacing:0.03px;word-spacing:0.39px">361,70 €</div><div class="c r" style="left:1062px;width:164px;word-spacing:0.42px">79,57 €</div><div class="c r" style="left:1227px;width:189px;letter-spacing:0.03px;word-spacing:0.39px">441,27 €</div><div class="c l" style="left:1417px;width:135px;letter-spacing:-0.98px">POS</div><div class="c l" style="left:1555px;width:109px;letter-spacing:0.24px">29092021</div><div class="c l" style="left:1667px;width:68px;letter-spacing:-0.22px">alberto</div><div class="c l" style="left:1738px;width:234px;letter-spacing:-0.20px;word-spacing:0.61px">lipo pos</div><div class="c l lnk" style="left:1975px;width:85px;letter-spacing:-0.20px;word-spacing:0.61px">Inviata al cliente</div><div class="c l" style="left:2063px;width:271px;letter-spacing:-0.22px">Italia</div></div><div class="row" style="top:467px"><div class="cb"></div><div class="c l" style="left:20px;width:135px;letter-spacing:-0.30px">Fattura</div><div class="c l" style="left:158px;width:104px;letter-spacing:0.13px">29/09/2021</div><div class="c l" style="left:265px;width:153px;letter-spacing:0.24px">1401934</div><div class="c l lnk" style="left:421px;width:262px;letter-spacing:-0.82px;word-spacing:1.24px">CBTEC SRL</div><div class="c l" style="left:686px;width:112px;letter-spacing:0.24px">04834560965</div><div class="c r" style="left:801px;width:114px;letter-spacing:0.15px">4218/2021/00</div><div class="c r" style="left:916px;width:145px;letter-spacing:0.03px;word-spacing:0.39px">962,17 €</div><div class="c r" style="left:1062px;width:164px;letter-spacing:0.03px;word-spacing:0.39px">211,68 €</div><div class="c r" style="left:1227px;width:189px;word-spacing:0.40px">1.173,85 €</div><div class="c l" style="left:1417px;width:135px;letter-spacing:-0.98px">ASSEGNO</div><div class="c l" style="left:1555px;width:109px;letter-spacing:0.24px">29092021</div><div class="c l" style="left:1667px;width:68px;letter-spacing:-0.31px">Alberto</div><div class="c l" style="left:1738px;width:234px;letter-spacing:0.10px;word-spacing:0.31px">lipo  7306542271</div><div class="c l lnk" style="left:1975px;width:85px;letter-spacing:-0.20px;word-spacing:0.61px">Inviata al cliente</div><div class="c l" style="left:2063px;width:271px;letter-spacing:-0.22px">Italia</div></div><div class="row" style="top:487px"><div class="cb"></div><div class="c l" style="left:20px;width:135px;letter-spacing:-0.30px">Fattura</div><div class="c l" style="left:158px;width:104px;letter-spacing:0.13px">29/09/2021</div><div class="c l" style="left:265px;width:153px;letter-spacing:0.24px">1409601</div><div class="c l lnk" style="left:421px;width:262px;letter-spacing:-0.84px;word-spacing:1.26px">LUMEN SRL</div><div class="c l" style="left:686px;width:112px;letter-spacing:0.24px">04394430161</div><div class="c r" style="left:801px;width:114px;letter-spacing:0.15px">4219/2021/00</div><div class="c r" style="left:916px;width:145px;letter-spacing:0.03px;word-spacing:0.39px">139,50 €</div><div class="c r" style="left:1062px;width:164px;word-spacing:0.42px">30,69 €</div><div class="c r" style="left:1227px;width:189px;letter-spacing:0.03px;word-spacing:0.39px">170,19 €</div><div class="c l" style="left:1417px;width:135px;letter-spacing:-0.84px">BONIFICO</div><div class="c l" style="left:1555px;width:109px;letter-spacing:0.24px">300921</div><div class="c l" style="left:1667px;width:68px;letter-spacing:-0.22px">alberto</div><div class="c l lnk" style="left:1975px;width:85px;letter-spacing:-0.20px;word-spacing:0.61px">Inviata al cliente</div><div class="c l" style="left:2063px;width:271px;letter-spacing:-0.22px">Italia</div></div><div class="row" style="top:507px"><div class="cb"></div><div class="c l" style="left:20px;width:135px;letter-spacing:-0.30px">Fattura</div><div class="c l" style="left:158px;width:104px;letter-spacing:0.13px">29/09/2021</div><div class="c l" style="left:265px;width:153px;letter-spacing:0.24px">1400559</div><div class="c l lnk" style="left:421px;width:262px;letter-spacing:-0.83px;word-spacing:1.25px">D'AMICO GIACOMO</div><div class="c l" style="left:686px;width:112px;letter-spacing:0.24px">06015170829</div><div class="c r" style="left:801px;width:114px;letter-spacing:0.15px">4220/2021/00</div><div class="c r" style="left:916px;width:145px;word-spacing:0.42px">18,00 €</div><div class="c r" style="left:1062px;width:164px;letter-spacing:-0.04px;word-spacing:0.46px">3,96 €</div><div class="c r" style="left:1227px;width:189px;word-spacing:0.42px">21,96 €</div><div class="c l" style="left:1417px;width:135px;letter-spacing:-0.84px">BONIFICO</div><div class="c l" style="left:1555px;width:109px;letter-spacing:0.24px">290921</div><div class="c l" style="left:1667px;width:68px;letter-spacing:-0.22px">alberto</div><div class="c l lnk" style="left:1975px;width:85px;letter-spacing:-0.20px;word-spacing:0.61px">Inviata al cliente</div><div class="c l" style="left:2063px;width:271px;letter-spacing:-0.22px">Italia</div></div><div class="row" style="top:527px"><div class="cb"></div><div class="c l" style="left:20px;width:135px;letter-spacing:-0.30px">Fattura</div><div class="c l" style="left:158px;width:104px;letter-spacing:0.13px">29/09/2021</div><div class="c l" style="left:265px;width:153px;letter-spacing:-0.08px">AZ25619</div><div class="c l lnk" style="left:421px;width:262px;letter-spacing:-0.31px;word-spacing:0.73px">Ej Project Srl</div><div class="c l" style="left:686px;width:112px;letter-spacing:0.24px">04444540167</div><div class="c r" style="left:801px;width:114px;letter-spacing:0.15px">4221/2021/00</div><div class="c r" style="left:916px;width:145px;letter-spacing:0.03px;word-spacing:0.39px">179,43 €</div><div class="c r" style="left:1062px;width:164px;word-spacing:0.42px">39,47 €</div><div class="c r" style="left:1227px;width:189px;letter-spacing:0.03px;word-spacing:0.39px">218,90 €</div><div class="c l" style="left:1417px;width:135px;letter-spacing:-0.98px">POS</div><div class="c l" style="left:1555px;width:109px;letter-spacing:0.24px">29092021</div><div class="c l" style="left:1667px;width:68px;letter-spacing:-0.35px">Giuseppe</div><div class="c l" style="left:1738px;width:234px;letter-spacing:-0.88px">LIPORACE</div><div class="c l lnk" style="left:1975px;width:85px;letter-spacing:-0.20px;word-spacing:0.61px">Inviata al cliente</div><div class="c l" style="left:2063px;width:271px;letter-spacing:-0.22px">Italia</div></div><div class="row" style="top:547px"><div class="cb"></div><div class="c l" style="left:20px;width:135px;letter-spacing:-0.30px">Fattura</div><div class="c l" style="left:158px;width:104px;letter-spacing:0.13px">29/09/2021</div><div class="c l" style="left:265px;width:153px;letter-spacing:0.24px">1408466</div><div class="c l lnk" style="left:421px;width:262px;letter-spacing:-0.74px;word-spacing:1.16px">FAR VISION SRLS</div><div class="c l" style="left:686px;width:112px;letter-spacing:0.24px">04171990247</div><div class="c r" style="left:801px;width:114px;letter-spacing:0.15px">4222/2021/00</div><div class="c r" style="left:916px;width:145px;letter-spacing:0.03px;word-spacing:0.39px">440,75 €</div><div class="c r" style="left:1062px;width:164px;word-spacing:0.42px">96,97 €</div><div class="c r" style="left:1227px;width:189px;letter-spacing:0.03px;word-spacing:0.39px">537,72 €</div><div class="c l" style="left:1417px;width:135px;letter-spacing:-0.90px">PAYPAL</div><div class="c l" style="left:1555px;width:109px;letter-spacing:0.24px">29092021</div><div class="c l" style="left:1667px;width:68px;letter-spacing:-0.22px">alberto</div><div class="c l lnk" style="left:1975px;width:85px;letter-spacing:-0.20px;word-spacing:0.61px">Inviata al cliente</div><div class="c l" style="left:2063px;width:271px;letter-spacing:-0.22px">Italia</div></div><div class="row" style="top:567px"><div class="cb"></div><div class="c l" style="left:20px;width:135px;letter-spacing:-0.30px">Fattura</div><div class="c l" style="left:158px;width:104px;letter-spacing:0.13px">29/09/2021</div><div class="c l" style="left:265px;width:153px;letter-spacing:0.24px">1407685</div><div class="c l lnk" style="left:421px;width:262px;letter-spacing:-0.82px;word-spacing:1.23px">DI DONATO STEFANO</div><div class="c l" style="left:686px;width:112px;letter-spacing:0.24px">09731950961</div><div class="c r" style="left:801px;width:114px;letter-spacing:0.15px">4223/2021/00</div><div class="c r" style="left:916px;width:145px;word-spacing:0.42px">55,00 €</div><div class="c r" style="left:1062px;width:164px;word-spacing:0.42px">12,10 €</div><div class="c r" style="left:1227px;width:189px;word-spacing:0.42px">67,10 €</div><div class="c l" style="left:1417px;width:135px;letter-spacing:-0.98px">POS</div><div class="c l" style="left:1555px;width:109px;letter-spacing:0.24px">29092021</div><div class="c l" style="left:1667px;width:68px;letter-spacing:-0.22px">alberto</div><div class="c l" style="left:1738px;width:234px;letter-spacing:-0.21px;word-spacing:0.63px">abi pos</div><div class="c l lnk" style="left:1975px;width:85px;letter-spacing:-0.20px;word-spacing:0.61px">Inviata al cliente</div><div class="c l" style="left:2063px;width:271px;letter-spacing:-0.22px">Italia</div></div><div class="row" style="top:587px"><div class="cb"></div><div class="c l" style="left:20px;width:135px;letter-spacing:-0.30px">Fattura</div></div><div class="row" style="top:607px"><div class="cb"></div><div class="c l" style="left:20px;width:135px;letter-spacing:-0.30px">Fattura</div></div><div class="row" style="top:627px"><div class="cb"></div><div class="c l" style="left:20px;width:135px;letter-spacing:-0.30px">Fattura</div></div><div class="row" style="top:647px"><div class="cb"></div><div class="c l" style="left:20px;width:135px;letter-spacing:-0.30px">Fattura</div></div><div class="row" style="top:667px"><div class="cb"></div><div class="c l" style="left:20px;width:135px;letter-spacing:-0.30px">Fattura</div></div><div class="row" style="top:687px"><div class="cb"></div><div class="c l" style="left:20px;width:135px;letter-spacing:-0.30px">Fattura</div></div><div class="row" style="top:707px"><div class="cb"></div><div class="c l" style="left:20px;width:135px;letter-spacing:-0.30px">Fattura</div></div><div class="row" style="top:727px"><div class="cb"></div><div class="c l" style="left:20px;width:135px;letter-spacing:-0.30px">Fattura</div></div><div class="row" style="top:747px"><div class="cb"></div><div class="c l" style="left:20px;width:135px;letter-spacing:-0.30px">Fattura</div></div><div class="row" style="top:767px"><div class="cb"></div><div class="c l" style="left:20px;width:135px;letter-spacing:-0.30px">Fattura</div></div><div class="row" style="top:787px"><div class="cb"></div><div class="c l" style="left:20px;width:135px;letter-spacing:-0.30px">Fattura</div></div><div class="row" style="top:807px"><div class="cb"></div><div class="c l" style="left:20px;width:135px;letter-spacing:-0.30px">Fattura</div></div><div class="row" style="top:827px"><div class="cb"></div><div class="c l" style="left:20px;width:135px;letter-spacing:-0.30px">Fattura</div></div><div class="row" style="top:847px"><div class="cb"></div><div class="c l" style="left:20px;width:135px;letter-spacing:-0.30px">Fattura</div></div><div class="row" style="top:867px"><div class="cb"></div><div class="c l" style="left:20px;width:135px;letter-spacing:-0.30px">Fattura</div></div><div class="row" style="top:887px"><div class="cb"></div><div class="c l" style="left:20px;width:135px;letter-spacing:-0.30px">Fattura</div></div><div class="row" style="top:907px"><div class="cb"></div><div class="c l" style="left:20px;width:135px;letter-spacing:-0.30px">Fattura</div></div><div class="row" style="top:927px"><div class="cb"></div><div class="c l" style="left:20px;width:135px;letter-spacing:-0.30px">Fattura</div></div><div class="row" style="top:947px"><div class="cb"></div><div class="c l" style="left:20px;width:135px;letter-spacing:-0.30px">Fattura</div></div><div class="row" style="top:967px"><div class="cb"></div><div class="c l" style="left:20px;width:135px;letter-spacing:-0.30px">Fattura</div></div><div class="row" style="top:987px"><div class="cb"></div><div class="c l" style="left:20px;width:135px;letter-spacing:-0.30px">Fattura</div></div><div class="row" style="top:1007px"><div class="cb"></div><div class="c l" style="left:20px;width:135px;letter-spacing:-0.30px">Fattura</div></div><div class="row" style="top:1027px"><div class="cb"></div><div class="c l" style="left:20px;width:135px;letter-spacing:-0.30px">Fattura</div></div><div class="row" style="top:1047px"><div class="cb"></div><div class="c l" style="left:20px;width:135px;letter-spacing:-0.30px">Fattura</div></div><div class="row" style="top:1067px"><div class="cb"></div><div class="c l" style="left:20px;width:135px;letter-spacing:-0.30px">Fattura</div></div><div class="row" style="top:1087px"><div class="cb"></div><div class="c l" style="left:20px;width:135px;letter-spacing:-0.30px">Fattura</div></div><div class="row" style="top:1107px"><div class="cb"></div><div class="c l" style="left:20px;width:135px;letter-spacing:-0.30px">Fattura</div></div><div class="row" style="top:1127px"><div class="cb"></div><div class="c l" style="left:20px;width:135px;letter-spacing:-0.30px">Fattura</div></div><div class="row" style="top:1147px"><div class="cb"></div><div class="c l" style="left:20px;width:135px;letter-spacing:-0.30px">Fattura</div><div class="c l" style="left:158px;width:104px;letter-spacing:0.13px">30/09/2021</div><div class="c l" style="left:265px;width:153px;letter-spacing:0.24px">1428347</div><div class="c l lnk" style="left:421px;width:262px;letter-spacing:-0.77px;word-spacing:1.18px">VINZITECH DI BONO VINCENZO</div><div class="c l" style="left:686px;width:112px;letter-spacing:0.24px">03163560802</div><div class="c r" style="left:801px;width:114px;letter-spacing:0.15px">4252/2021/00</div><div class="c r" style="left:916px;width:145px;letter-spacing:0.03px;word-spacing:0.39px">875,47 €</div><div class="c r" style="left:1062px;width:164px;letter-spacing:0.03px;word-spacing:0.39px">192,61 €</div><div class="c r" style="left:1227px;width:189px;word-spacing:0.40px">1.068,08 €</div><div class="c l" style="left:1417px;width:135px;letter-spacing:-0.84px">STRIPE</div><div class="c l" style="left:1555px;width:109px;letter-spacing:0.24px">02092021</div><div class="c l" style="left:1667px;width:68px;letter-spacing:-0.22px">alberto</div><div class="c l" style="left:1738px;width:234px;letter-spacing:-0.95px">DDT</div><div class="c l lnk" style="left:1975px;width:85px;letter-spacing:-0.20px;word-spacing:0.61px">Inviata al cliente</div><div class="c l" style="left:2063px;width:271px;letter-spacing:-0.22px">Italia</div></div><div class="row" style="top:1167px"><div class="cb"></div><div class="c l" style="left:20px;width:135px;letter-spacing:-0.30px">Fattura</div><div class="c l" style="left:158px;width:104px;letter-spacing:0.13px">30/09/2021</div><div class="c l" style="left:265px;width:153px;letter-spacing:0.24px">1406020</div><div class="c l lnk" style="left:421px;width:262px;letter-spacing:-0.86px;word-spacing:1.28px">BARACOS SRL</div><div class="c l" style="left:686px;width:112px;letter-spacing:0.24px">09590200961</div><div class="c r" style="left:801px;width:114px;letter-spacing:0.15px">4253/2021/00</div><div class="c r" style="left:916px;width:145px;word-spacing:0.40px">2.575,30 €</div><div class="c r" style="left:1062px;width:164px;letter-spacing:0.03px;word-spacing:0.39px">566,57 €</div><div class="c r" style="left:1227px;width:189px;word-spacing:0.40px">3.141,87 €</div><div class="c l" style="left:1417px;width:135px;letter-spacing:-0.98px">POS</div><div class="c l" style="left:1555px;width:109px;letter-spacing:0.24px">150921</div><div class="c l" style="left:1667px;width:68px;letter-spacing:-0.25px">matteo</div><div class="c l" style="left:1738px;width:234px;letter-spacing:-0.95px">DDT</div><div class="c l lnk" style="left:1975px;width:85px;letter-spacing:-0.20px;word-spacing:0.61px">Inviata al cliente</div><div class="c l" style="left:2063px;width:271px;letter-spacing:-0.22px">Italia</div></div><div class="row" style="top:1187px"><div class="cb"></div><div class="c l" style="left:20px;width:135px;letter-spacing:-0.30px">Fattura</div><div class="c l" style="left:158px;width:104px;letter-spacing:0.13px">30/09/2021</div><div class="c l" style="left:265px;width:153px;letter-spacing:0.24px">1406100</div><div class="c l lnk" style="left:421px;width:262px;letter-spacing:-0.80px;word-spacing:1.22px">EMME WEB SHOPPING DI FERRETTI MAURO</div><div class="c l" style="left:686px;width:112px;letter-spacing:0.24px">01268450440</div><div class="c r" style="left:801px;width:114px;letter-spacing:0.15px">4254/2021/00</div><div class="c r" style="left:916px;width:145px;letter-spacing:0.03px;word-spacing:0.39px">559,54 €</div><div class="c r" style="left:1062px;width:164px;letter-spacing:0.03px;word-spacing:0.39px">123,10 €</div><div class="c r" style="left:1227px;width:189px;letter-spacing:0.03px;word-spacing:0.39px">682,64 €</div><div class="c l" style="left:1417px;width:135px;letter-spacing:-0.84px">STRIPE</div><div class="c l" style="left:1555px;width:109px;letter-spacing:0.24px">02092021</div><div class="c l" style="left:1667px;width:68px;letter-spacing:-0.22px">alberto</div><div class="c l" style="left:1738px;width:234px;letter-spacing:-0.95px">DDT</div><div class="c l lnk" style="left:1975px;width:85px;letter-spacing:-0.20px;word-spacing:0.61px">Inviata al cliente</div><div class="c l" style="left:2063px;width:271px;letter-spacing:-0.22px">Italia</div></div><div class="row" style="top:1207px"><div class="cb"></div><div class="c l" style="left:20px;width:135px;letter-spacing:-0.30px">Fattura</div><div class="c l" style="left:158px;width:104px;letter-spacing:0.13px">30/09/2021</div><div class="c l" style="left:265px;width:153px;letter-spacing:0.24px">1406100</div><div class="c l lnk" style="left:421px;width:262px;letter-spacing:-0.80px;word-spacing:1.22px">EMME WEB SHOPPING DI FERRETTI MAURO</div><div class="c l" style="left:686px;width:112px;letter-spacing:0.24px">01268450440</div><div class="c r" style="left:801px;width:114px;letter-spacing:0.15px">4255/2021/00</div><div class="c r" style="left:916px;width:145px;letter-spacing:0.03px;word-spacing:0.39px">107,74 €</div><div class="c r" style="left:1062px;width:164px;word-spacing:0.42px">23,70 €</div><div class="c r" style="left:1227px;width:189px;letter-spacing:0.03px;word-spacing:0.39px">131,44 €</div><div class="c l" style="left:1417px;width:135px;letter-spacing:-0.90px">PAYPAL</div><div class="c l" style="left:1738px;width:234px;letter-spacing:-0.95px">DDT</div><div class="c l lnk" style="left:1975px;width:85px;letter-spacing:-0.20px;word-spacing:0.61px">Inviata al cliente</div><div class="c l" style="left:2063px;width:271px;letter-spacing:-0.22px">Italia</div></div>
<div id="sep"></div>
<div id="foot">
 <div class="fc" style="left:160px;width:104px;padding-left:3px">532 voci</div>
 <div class="fc" style="left:917px;width:143px;text-align:right;padding-right:3px">133.121,82 €</div>
 <div class="fc" style="left:1063px;width:162px;text-align:right;padding-right:3px">27.374,49 €</div>
 <div class="fc" style="left:1228px;width:187px;text-align:right;padding-right:3px">160.496,31 €</div>
</div>
</div>
<div id="sb">
 <svg style="position:absolute;left:3px;top:5px" width="11" height="8" viewBox="0 0 11 8"><path d="M1.5 6.5 L5.5 2.5 L9.5 6.5" fill="none" stroke="#333" stroke-width="1.6"/></svg>
 <div id="thumb"></div>
 <svg style="position:absolute;left:3px;top:1236px" width="11" height="8" viewBox="0 0 11 8"><path d="M1.5 1.5 L5.5 5.5 L9.5 1.5" fill="none" stroke="#333" stroke-width="1.6"/></svg>
</div>
<div id="side">
<div class="t" style="position:absolute;left:18.00px;top:16.13px;font-size:15.5px;line-height:19px;white-space:pre;color:#a9d4ff;letter-spacing:0.4px">Periodo</div>
<div class="shl" style="left:77px;top:30px;width:109px"></div>
<div class="t" style="position:absolute;left:35.00px;top:42.50px;font-size:13px;line-height:16px;white-space:pre;">Tutti</div>
<div class="t" style="position:absolute;left:35.00px;top:66.50px;font-size:13px;line-height:16px;white-space:pre;">Mese corrente</div>
<div class="t" style="position:absolute;left:35.00px;top:90.50px;font-size:13px;line-height:16px;white-space:pre;">Mese scorso</div>
<div class="t" style="position:absolute;left:35.00px;top:114.50px;font-size:13px;line-height:16px;white-space:pre;">Anno corrente</div>
<div class="t" style="position:absolute;left:35.00px;top:138.00px;font-size:13px;line-height:16px;white-space:pre;">Anno scorso</div>
<div class="bul" style="left:17px;top:168px"></div>
<div class="t" style="position:absolute;left:35.00px;top:162.00px;font-size:13px;line-height:16px;white-space:pre;font-weight:bold;letter-spacing:0.6px">Settembre 2021</div>
<div class="t" style="position:absolute;left:35.00px;top:186.00px;font-size:13px;line-height:16px;white-space:pre;">Altro...</div>
<div class="t" style="position:absolute;left:17.00px;top:223.63px;font-size:15.5px;line-height:19px;white-space:pre;color:#a9d4ff;letter-spacing:0.4px">Stato</div>
<div class="shl" style="left:63px;top:238px;width:123px"></div>
<div class="bul" style="left:17px;top:256px"></div>
<div class="t" style="position:absolute;left:35.00px;top:250.50px;font-size:13px;line-height:16px;white-space:pre;font-weight:bold;letter-spacing:0.3px">Tutti</div>
<div class="t" style="position:absolute;left:35.00px;top:274.00px;font-size:13px;line-height:16px;white-space:pre;">Da saldare</div>
<div class="t" style="position:absolute;left:35.00px;top:298.00px;font-size:13px;line-height:16px;white-space:pre;">Saldati</div>
<div class="t" style="position:absolute;left:17.00px;top:335.63px;font-size:15.5px;line-height:19px;white-space:pre;color:#a9d4ff;letter-spacing:0.4px">Cliente</div>
<div class="shl" style="left:73px;top:350px;width:113px"></div>
<div style="position:absolute;left:17px;top:363px;width:141px;height:21px;background:#e1e1e1;border:1px solid #cfcfcf"></div>
<div class="t" style="position:absolute;left:27.00px;top:365.67px;font-size:12.5px;line-height:16px;white-space:pre;color:#111">-  Tutti  -</div>
<svg style="position:absolute;left:143px;top:368px" width="12" height="9" viewBox="0 0 12 9"><path d="M2.3 3.6 L6 7.3 L9.7 3.6" fill="none" stroke="#2a2a2a" stroke-width="1.3"/></svg>
<svg style="position:absolute;left:164px;top:368px" width="18" height="14" viewBox="0 0 18 14"><path d="M4 6.5 Q9 0.5 14 6.5 L12.5 8 Q9 5 5.5 8 Z" fill="#1f3520"/><ellipse cx="4.5" cy="8" rx="3" ry="3.6" fill="#2d5a1e"/><ellipse cx="13.5" cy="8" rx="3" ry="3.6" fill="#2d5a1e"/><ellipse cx="4.5" cy="8" rx="2.3" ry="2.9" fill="#8fce4a"/><ellipse cx="13.5" cy="8" rx="2.3" ry="2.9" fill="#9bd65a"/></svg>
</div>
<div id="overlay">
<div class="band" style="top:0px;height:31px"></div>
<div class="band" style="top:58px;height:28px"></div>
<div class="band" style="top:114px;height:28px"></div>
<div class="band" style="top:170px;height:30px"></div>
<div class="band" style="top:226px;height:30px"></div>
<div class="band" style="top:282px;height:29px"></div>
<div class="band" style="top:339px;height:28px"></div>
<div class="band" style="top:396px;height:29px"></div>
<div class="band" style="top:451px;height:30px"></div>
<div class="band" style="top:508px;height:30px"></div>
<div class="band" style="top:566px;height:8px"></div>
<div style="position:absolute;left:27px;top:213px;width:2143px;height:2px;background:#c6c6c6"></div>
<div style="position:absolute;left:27px;top:269px;width:2143px;height:2px;background:#c6c6c6"></div>
<div style="position:absolute;left:27px;top:495px;width:2143px;height:2px;background:#c6c6c6"></div>
<div style="position:absolute;left:27px;top:551px;width:2143px;height:2px;background:#c6c6c6"></div>
<div style="position:absolute;left:705px;top:438px;width:123px;height:1px;background:#c8c8c8"></div>
<div style="position:absolute;left:890px;top:438px;width:123px;height:1px;background:#c8c8c8"></div>
<div style="position:absolute;left:26px;top:0;width:2px;height:552px;background:#c6c6c6"></div>
<div style="position:absolute;left:2169px;top:0;width:2px;height:552px;background:#c6c6c6"></div>
<div class="t" style="position:absolute;left:704.00px;top:0.02px;font-size:18.7px;line-height:23px;white-space:pre;color:#262626">005874257132</div>
<div class="t" style="position:absolute;left:951.00px;top:0.02px;font-size:18.7px;line-height:23px;white-space:pre;color:#262626">03302550169 / 03302550169</div>
<div class="t" style="position:absolute;left:830.50px;width:600px;text-align:right;top:28.02px;font-size:18.7px;line-height:23px;white-space:pre;color:#262626">4276</div>
<div class="t" style="position:absolute;left:1456.50px;top:28.02px;font-size:18.7px;line-height:23px;white-space:pre;color:#262626">30/09/21</div>
<div class="t" style="position:absolute;left:1076.50px;width:600px;text-align:right;top:28.02px;font-size:18.7px;line-height:23px;white-space:pre;color:#262626">39,77</div>
<div class="t" style="position:absolute;left:1730.00px;top:28.02px;font-size:18.7px;line-height:23px;white-space:pre;color:#262626">22</div>
<div class="t" style="position:absolute;left:1360.00px;width:600px;text-align:right;top:28.02px;font-size:18.7px;line-height:23px;white-space:pre;color:#262626">8,75</div>
<div class="t" style="position:absolute;left:1531.00px;width:600px;text-align:right;top:28.02px;font-size:18.7px;line-height:23px;white-space:pre;color:#262626">48,52</div>
<div class="t" style="position:absolute;left:830.50px;width:600px;text-align:right;top:112.02px;font-size:18.7px;line-height:23px;white-space:pre;color:#262626">4277</div>
<div class="t" style="position:absolute;left:1456.50px;top:112.02px;font-size:18.7px;line-height:23px;white-space:pre;color:#262626">30/09/21</div>
<div class="t" style="position:absolute;left:1076.50px;width:600px;text-align:right;top:112.02px;font-size:18.7px;line-height:23px;white-space:pre;color:#262626">30,33</div>
<div class="t" style="position:absolute;left:1730.00px;top:112.02px;font-size:18.7px;line-height:23px;white-space:pre;color:#262626">22</div>
<div class="t" style="position:absolute;left:1360.00px;width:600px;text-align:right;top:112.02px;font-size:18.7px;line-height:23px;white-space:pre;color:#262626">6,67</div>
<div class="t" style="position:absolute;left:1531.00px;width:600px;text-align:right;top:112.02px;font-size:18.7px;line-height:23px;white-space:pre;color:#262626">37,00</div>
<div class="t" style="position:absolute;left:830.50px;width:600px;text-align:right;top:140.02px;font-size:18.7px;line-height:23px;white-space:pre;color:#262626">4278</div>
<div class="t" style="position:absolute;left:1456.50px;top:140.02px;font-size:18.7px;line-height:23px;white-space:pre;color:#262626">30/09/21</div>
<div class="t" style="position:absolute;left:1076.50px;width:600px;text-align:right;top:140.02px;font-size:18.7px;line-height:23px;white-space:pre;color:#262626">65,33</div>
<div class="t" style="position:absolute;left:1730.00px;top:140.02px;font-size:18.7px;line-height:23px;white-space:pre;color:#262626">22</div>
<div class="t" style="position:absolute;left:1360.00px;width:600px;text-align:right;top:140.02px;font-size:18.7px;line-height:23px;white-space:pre;color:#262626">14,37</div>
<div class="t" style="position:absolute;left:1531.00px;width:600px;text-align:right;top:140.02px;font-size:18.7px;line-height:23px;white-space:pre;color:#262626">79,70</div>
<div class="t" style="position:absolute;left:52.50px;top:56.02px;font-size:18.7px;line-height:23px;white-space:pre;color:#262626">30/09/21</div>
<div class="t" style="position:absolute;left:150.50px;top:56.02px;font-size:18.7px;line-height:23px;white-space:pre;color:#262626">FATTURA VENDITA</div>
<div class="t" style="position:absolute;left:264.00px;width:600px;text-align:right;top:56.02px;font-size:18.7px;line-height:23px;white-space:pre;color:#262626">4277/2021/00</div>
<div class="t" style="position:absolute;left:338.00px;width:600px;text-align:right;top:56.02px;font-size:18.7px;line-height:23px;white-space:pre;color:#262626">19753</div>
<div class="t" style="position:absolute;left:951.00px;top:56.02px;font-size:18.7px;line-height:23px;white-space:pre;color:#262626">CAR SERVICE DI SCHIDONI MASSIMO &amp; C. S.N.C.</div>
<div class="t" style="position:absolute;left:52.50px;top:140.02px;font-size:18.7px;line-height:23px;white-space:pre;color:#262626">30/09/21</div>
<div class="t" style="position:absolute;left:150.50px;top:140.02px;font-size:18.7px;line-height:23px;white-space:pre;color:#262626">FATTURA VENDITA</div>
<div class="t" style="position:absolute;left:264.00px;width:600px;text-align:right;top:140.02px;font-size:18.7px;line-height:23px;white-space:pre;color:#262626">4278/2021/00</div>
<div class="t" style="position:absolute;left:338.00px;width:600px;text-align:right;top:140.02px;font-size:18.7px;line-height:23px;white-space:pre;color:#262626">7507</div>
<div class="t" style="position:absolute;left:951.00px;top:140.02px;font-size:18.7px;line-height:23px;white-space:pre;color:#262626">MB NETWORK DI BARBONI MASSIMO</div>
<div class="t" style="position:absolute;left:704.00px;top:84.02px;font-size:18.7px;line-height:23px;white-space:pre;color:#262626">005874257141</div>
<div class="t" style="position:absolute;left:951.00px;top:84.02px;font-size:18.7px;line-height:23px;white-space:pre;color:#262626">09810420159 / 09810420159</div>
<div class="t" style="position:absolute;left:704.00px;top:168.02px;font-size:18.7px;line-height:23px;white-space:pre;color:#262626">005874257161</div>
<div class="t" style="position:absolute;left:951.00px;top:168.02px;font-size:18.7px;line-height:23px;white-space:pre;color:#262626">04269290161 / BRBMSM73R03H199V</div>
<div class="t" style="position:absolute;left:-480.00px;width:600px;text-align:right;top:225.52px;font-size:18.7px;line-height:23px;white-space:pre;color:#262626">Codice</div>
<div class="t" style="position:absolute;left:150.00px;top:225.52px;font-size:18.7px;line-height:23px;white-space:pre;color:#262626">Descrizione</div>
<div class="t" style="position:absolute;left:678.00px;top:225.52px;font-size:18.7px;line-height:23px;white-space:pre;color:#262626">Totale imponibile</div>
<div class="t" style="position:absolute;left:887.00px;top:225.52px;font-size:18.7px;line-height:23px;white-space:pre;color:#262626">Totale imposta</div>
<div class="t" style="position:absolute;left:-483.50px;width:600px;text-align:right;top:281.52px;font-size:18.7px;line-height:23px;white-space:pre;color:#262626">5</div>
<div class="t" style="position:absolute;left:150.00px;top:281.52px;font-size:18.7px;line-height:23px;white-space:pre;color:#262626">Aliq. Iva 5%</div>
<div class="t" style="position:absolute;left:224.50px;width:600px;text-align:right;top:281.52px;font-size:18.7px;line-height:23px;white-space:pre;color:#262626">54,00</div>
<div class="t" style="position:absolute;left:409.50px;width:600px;text-align:right;top:281.52px;font-size:18.7px;line-height:23px;white-space:pre;color:#262626">2,70</div>
<div class="t" style="position:absolute;left:-483.50px;width:600px;text-align:right;top:309.52px;font-size:18.7px;line-height:23px;white-space:pre;color:#262626">22</div>
<div class="t" style="position:absolute;left:150.00px;top:309.52px;font-size:18.7px;line-height:23px;white-space:pre;color:#262626">Aliq. Iva 22%</div>
<div class="t" style="position:absolute;left:224.50px;width:600px;text-align:right;top:309.52px;font-size:18.7px;line-height:23px;white-space:pre;color:#262626">124.415,88</div>
<div class="t" style="position:absolute;left:409.50px;width:600px;text-align:right;top:309.52px;font-size:18.7px;line-height:23px;white-space:pre;color:#262626">27.371,79</div>
<div class="t" style="position:absolute;left:-483.50px;width:600px;text-align:right;top:337.52px;font-size:18.7px;line-height:23px;white-space:pre;color:#262626">324</div>
<div class="t" style="position:absolute;left:150.00px;top:337.52px;font-size:18.7px;line-height:23px;white-space:pre;color:#262626">N.I. art.8,1 c</div>
<div class="t" style="position:absolute;left:224.50px;width:600px;text-align:right;top:337.52px;font-size:18.7px;line-height:23px;white-space:pre;color:#262626">810,00</div>
<div class="t" style="position:absolute;left:-483.50px;width:600px;text-align:right;top:365.52px;font-size:18.7px;line-height:23px;white-space:pre;color:#262626">341</div>
<div class="t" style="position:absolute;left:150.00px;top:365.52px;font-size:18.7px;line-height:23px;white-space:pre;color:#262626">DL331/93 art.41</div>
<div class="t" style="position:absolute;left:224.50px;width:600px;text-align:right;top:365.52px;font-size:18.7px;line-height:23px;white-space:pre;color:#262626">4.776,64</div>
<div class="t" style="position:absolute;left:-483.50px;width:600px;text-align:right;top:394.52px;font-size:18.7px;line-height:23px;white-space:pre;color:#262626">371</div>
<div class="t" style="position:absolute;left:150.00px;top:394.52px;font-size:18.7px;line-height:23px;white-space:pre;color:#262626">N.I.art.71 RSM</div>
<div class="t" style="position:absolute;left:224.50px;width:600px;text-align:right;top:394.52px;font-size:18.7px;line-height:23px;white-space:pre;color:#262626">3.065,30</div>
<div class="t" style="position:absolute;left:150.00px;top:450.52px;font-size:18.7px;line-height:23px;white-space:pre;color:#262626">TOTALE</div>
<div class="t" style="position:absolute;left:224.50px;width:600px;text-align:right;top:450.52px;font-size:18.7px;line-height:23px;white-space:pre;color:#262626">133.121,82</div>
<div class="t" style="position:absolute;left:409.50px;width:600px;text-align:right;top:450.52px;font-size:18.7px;line-height:23px;white-space:pre;color:#262626">27.374,49</div>
<div class="t" style="position:absolute;left:1465.00px;top:506.52px;font-size:18.7px;line-height:23px;white-space:pre;color:#262626">TOTALI</div>
<div class="t" style="position:absolute;left:1583.00px;top:506.52px;font-size:18.7px;line-height:23px;white-space:pre;color:#262626">133.121,82</div>
<div class="t" style="position:absolute;left:1360.00px;width:600px;text-align:right;top:506.52px;font-size:18.7px;line-height:23px;white-space:pre;color:#262626">27.374,49</div>
<div class="t" style="position:absolute;left:1532.00px;width:600px;text-align:right;top:506.52px;font-size:18.7px;line-height:23px;white-space:pre;color:#262626">160.496,31</div>
</div>
<svg style="position:absolute;left:0;top:0" width="2556" height="1282" viewBox="0 0 2556 1282">
<rect x="9.7" y="29.5" width="149" height="48.7" fill="none" stroke="#e8323a" stroke-width="3"/>
<rect x="2354.3" y="189.2" width="155" height="26.5" fill="none" stroke="#e8323a" stroke-width="3"/>
<polygon fill="#e8323a" points="1646.9,1135.6 1066.9,1258.6 1068.8,1253.1 1054.0,1265.0 1072.4,1269.7 1068.4,1265.4 1647.1,1136.4"/>
<polygon fill="#e8323a" points="1942.9,1129.6 1240.1,1254.1 1242.2,1248.6 1227.0,1260.0 1245.2,1265.3 1241.4,1260.9 1943.1,1130.4"/>
<polygon fill="#e8323a" points="2113.9,1142.6 1425.2,1261.1 1427.3,1255.7 1412.0,1267.0 1430.2,1272.4 1426.4,1268.0 2114.1,1143.4"/>
</svg>
</body></html>
